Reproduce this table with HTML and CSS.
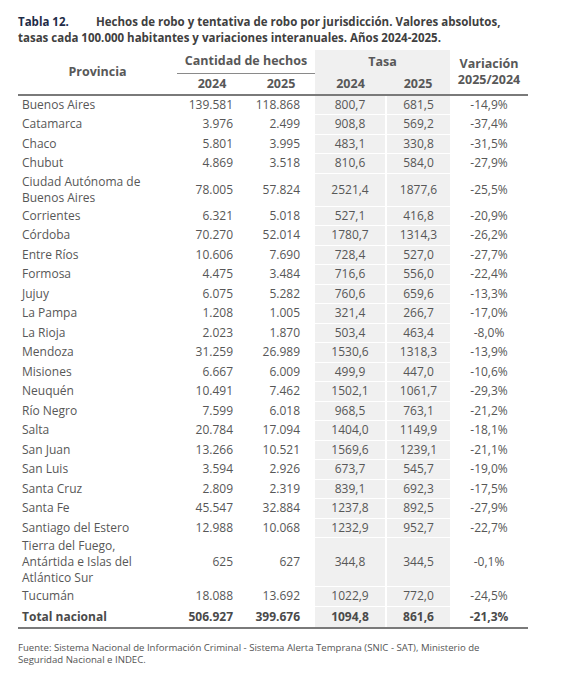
FILE: index.html
```html
<!DOCTYPE html>
<html lang="es">
<head>
<meta charset="utf-8">
<link rel="stylesheet" href="styles.css">
</head>
<body>
<div class="page">
  <p class="title"><span class="tag">Tabla 12.</span>Hechos de robo y tentativa de robo por jurisdicción. Valores absolutos,<br>tasas cada 100.000 habitantes y variaciones interanuales. Años 2024-2025.</p>
  <table class="data">
    <colgroup>
      <col class="c-prov"><col class="c-n1"><col class="c-n2"><col class="c-t1"><col class="c-t2"><col class="c-var">
    </colgroup>
    <thead>
      <tr class="h1">
        <th rowspan="2" class="prov-h">Provincia</th>
        <th colspan="2" class="cant-h">Cantidad de hechos</th>
        <th colspan="2" class="tasa-h">Tasa</th>
        <th rowspan="2" class="var-h">Variación<br>2025/2024</th>
      </tr>
      <tr class="h2">
        <th>2024</th><th>2025</th><th class="g">2024</th><th class="g">2025</th>
      </tr>
    </thead>
    <tbody>
      <tr><td class="p">Buenos Aires</td><td class="n">139.581</td><td class="n n2">118.868</td><td class="t">800,7</td><td class="t">681,5</td><td class="v">-14,9%</td></tr>
      <tr><td class="p">Catamarca</td><td class="n">3.976</td><td class="n n2">2.499</td><td class="t">908,8</td><td class="t">569,2</td><td class="v">-37,4%</td></tr>
      <tr><td class="p">Chaco</td><td class="n">5.801</td><td class="n n2">3.995</td><td class="t">483,1</td><td class="t">330,8</td><td class="v">-31,5%</td></tr>
      <tr><td class="p">Chubut</td><td class="n">4.869</td><td class="n n2">3.518</td><td class="t">810,6</td><td class="t">584,0</td><td class="v">-27,9%</td></tr>
      <tr><td class="p">Ciudad Autónoma de<br>Buenos Aires</td><td class="n">78.005</td><td class="n n2">57.824</td><td class="t">2521,4</td><td class="t">1877,6</td><td class="v">-25,5%</td></tr>
      <tr><td class="p">Corrientes</td><td class="n">6.321</td><td class="n n2">5.018</td><td class="t">527,1</td><td class="t">416,8</td><td class="v">-20,9%</td></tr>
      <tr><td class="p">Córdoba</td><td class="n">70.270</td><td class="n n2">52.014</td><td class="t">1780,7</td><td class="t">1314,3</td><td class="v">-26,2%</td></tr>
      <tr><td class="p">Entre Ríos</td><td class="n">10.606</td><td class="n n2">7.690</td><td class="t">728,4</td><td class="t">527,0</td><td class="v">-27,7%</td></tr>
      <tr><td class="p">Formosa</td><td class="n">4.475</td><td class="n n2">3.484</td><td class="t">716,6</td><td class="t">556,0</td><td class="v">-22,4%</td></tr>
      <tr><td class="p">Jujuy</td><td class="n">6.075</td><td class="n n2">5.282</td><td class="t">760,6</td><td class="t">659,6</td><td class="v">-13,3%</td></tr>
      <tr><td class="p">La Pampa</td><td class="n">1.208</td><td class="n n2">1.005</td><td class="t">321,4</td><td class="t">266,7</td><td class="v">-17,0%</td></tr>
      <tr><td class="p">La Rioja</td><td class="n">2.023</td><td class="n n2">1.870</td><td class="t">503,4</td><td class="t">463,4</td><td class="v">-8,0%</td></tr>
      <tr><td class="p">Mendoza</td><td class="n">31.259</td><td class="n n2">26.989</td><td class="t">1530,6</td><td class="t">1318,3</td><td class="v">-13,9%</td></tr>
      <tr><td class="p">Misiones</td><td class="n">6.667</td><td class="n n2">6.009</td><td class="t">499,9</td><td class="t">447,0</td><td class="v">-10,6%</td></tr>
      <tr><td class="p">Neuquén</td><td class="n">10.491</td><td class="n n2">7.462</td><td class="t">1502,1</td><td class="t">1061,7</td><td class="v">-29,3%</td></tr>
      <tr><td class="p">Río Negro</td><td class="n">7.599</td><td class="n n2">6.018</td><td class="t">968,5</td><td class="t">763,1</td><td class="v">-21,2%</td></tr>
      <tr><td class="p">Salta</td><td class="n">20.784</td><td class="n n2">17.094</td><td class="t">1404,0</td><td class="t">1149,9</td><td class="v">-18,1%</td></tr>
      <tr><td class="p">San Juan</td><td class="n">13.266</td><td class="n n2">10.521</td><td class="t">1569,6</td><td class="t">1239,1</td><td class="v">-21,1%</td></tr>
      <tr><td class="p">San Luis</td><td class="n">3.594</td><td class="n n2">2.926</td><td class="t">673,7</td><td class="t">545,7</td><td class="v">-19,0%</td></tr>
      <tr><td class="p">Santa Cruz</td><td class="n">2.809</td><td class="n n2">2.319</td><td class="t">839,1</td><td class="t">692,3</td><td class="v">-17,5%</td></tr>
      <tr><td class="p">Santa Fe</td><td class="n">45.547</td><td class="n n2">32.884</td><td class="t">1237,8</td><td class="t">892,5</td><td class="v">-27,9%</td></tr>
      <tr><td class="p">Santiago del Estero</td><td class="n">12.988</td><td class="n n2">10.068</td><td class="t">1232,9</td><td class="t">952,7</td><td class="v">-22,7%</td></tr>
      <tr><td class="p">Tierra del Fuego,<br>Antártida e Islas del<br>Atlántico Sur</td><td class="n">625</td><td class="n n2">627</td><td class="t">344,8</td><td class="t">344,5</td><td class="v">-0,1%</td></tr>
      <tr><td class="p">Tucumán</td><td class="n">18.088</td><td class="n n2">13.692</td><td class="t">1022,9</td><td class="t">772,0</td><td class="v">-24,5%</td></tr>
      <tr class="total"><td class="p">Total nacional</td><td class="n">506.927</td><td class="n n2">399.676</td><td class="t">1094,8</td><td class="t">861,6</td><td class="v">-21,3%</td></tr>
    </tbody>
  </table>
  <p class="note">Fuente: Sistema Nacional de Información Criminal - Sistema Alerta Temprana (SNIC - SAT), Ministerio de<br>Seguridad Nacional e INDEC.</p>
</div>
</body>
</html>
```

FILE: styles.css
```css
html, body {
  margin: 0;
  padding: 0;
  background: #ffffff;
}

.page {
  padding: 14px 0 0 18px;
  font-family: "Open Sans", "Liberation Sans", sans-serif;
  color: #575757;
}

.title {
  margin: 0;
  font-size: 11.5px;
  line-height: 16px;
  font-weight: 700;
  color: #404040;
  white-space: nowrap;
}

.title .tag {
  display: inline-block;
  width: 78px;
  color: #1e2b47;
}

.data {
  margin-top: 4px;
  border-collapse: collapse;
  table-layout: fixed;
  width: 510px;
  font-size: 12px;
}

.c-prov { width: 159px; }
.c-n1 { width: 70px; }
.c-n2 { width: 68px; }
.c-t1 { width: 71px; }
.c-t2 { width: 64px; }
.c-var { width: 78px; }

.data th {
  font-weight: 700;
  font-size: 12.5px;
  color: #585858;
  padding: 0;
  text-align: center;
  vertical-align: middle;
  line-height: 16px;
}

.data .h1 { height: 23px; }
.data .h2 { height: 22px; }

.data .cant-h {
  border-bottom: 1px solid #8a8a8a;
}

.data .tasa-h,
.data th.g {
  background: #f0f0f0;
}

.data .h2 th,
.data .var-h,
.data .prov-h {
  border-bottom: 2.5px solid #7a7a7a;
}

.data tbody tr { height: 19.5px; }
.data tbody tr.total { height: 22px; }

.data td {
  padding: 0;
  line-height: 16px;
  vertical-align: middle;
  white-space: nowrap;
  border-bottom: 1px solid #ffffff;
}

.data td.p {
  padding-left: 4px;
  text-align: left;
}

.data td.n {
  text-align: right;
  padding-right: 14px;
}

.data td.n2 {
  padding-right: 15px;
}

.data td.t {
  text-align: center;
  background: #f0f0f0;
  border-right: 2px solid #ffffff;
}

.data td.t + td.t {
  border-right: 0;
}

.data td.v {
  text-align: center;
}

.data .total td {
  font-weight: 700;
  color: #4a4a4a;
  border-bottom: 2.5px solid #7a7a7a;
}

.note {
  margin: 13px 0 0 0;
  font-size: 9.6px;
  line-height: 11.5px;
  color: #555555;
  white-space: nowrap;
}
```
